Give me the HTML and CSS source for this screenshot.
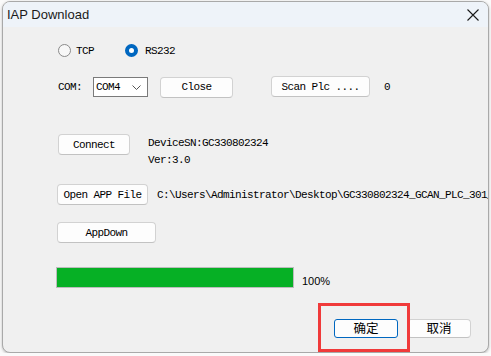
FILE: index.html
```html
<!DOCTYPE html>
<html lang="zh">
  <head>
    <meta charset="UTF-8" />
    <title>IAP Download</title>
    <link rel="stylesheet" href="styles.css">
  </head>
  <body>
    <div class="window">
      <div class="titlebar">
        <span class="title">IAP Download</span>
        <svg class="close-x" width="12" height="12" viewBox="0 0 12 12">
          <path d="M0.5 0.5 L11.5 11.5 M11.5 0.5 L0.5 11.5" stroke="#1a1a1a" stroke-width="1.1" fill="none"/>
        </svg>
      </div>

      <div class="content">
        <div class="row row-radio">
          <label class="radio">
            <span class="dot"></span>
            <span class="mono">TCP</span>
          </label>
          <label class="radio radio-rs">
            <span class="dot checked"></span>
            <span class="mono">RS232</span>
          </label>
        </div>

        <div class="row row-com">
          <span class="mono com-label">COM:</span>
          <div class="select">
            <span class="mono">COM4</span>
            <svg width="9" height="5" viewBox="0 0 9 5">
              <path d="M0.5 0.5 L4.5 4.5 L8.5 0.5" stroke="#555" stroke-width="1" fill="none"/>
            </svg>
          </div>
          <button class="btn btn-close">Close</button>
          <button class="btn btn-scan">Scan Plc ....</button>
          <span class="mono count">0</span>
        </div>

        <div class="row row-connect">
          <button class="btn btn-connect">Connect</button>
          <div class="info mono">
            <div>DeviceSN:GC330802324</div>
            <div>Ver:3.0</div>
          </div>
        </div>

        <div class="row row-file">
          <button class="btn btn-open">Open APP File</button>
          <span class="mono path">C:\Users\Administrator\Desktop\GC330802324_GCAN_PLC_301_</span>
        </div>

        <div class="row row-down">
          <button class="btn btn-appdown">AppDown</button>
        </div>

        <div class="row row-progress">
          <div class="progress"><div class="fill" style="width: 100%"></div></div>
          <span class="percent">100%</span>
        </div>

        <div class="row row-actions">
          <button class="btn btn-cn btn-ok">确定</button>
          <button class="btn btn-cn btn-cancel">取消</button>
        </div>
      </div>

      <div class="highlight"></div>
    </div>
  </body>
</html>
```

FILE: styles.css
```css
* {
    margin: 0;
    padding: 0;
    box-sizing: border-box;
}

body {
    background-color: #fafafa;
    font-family: "Noto Sans", "Liberation Sans", sans-serif;
    color: #000;
}

.window {
    position: relative;
    margin: 1px 0 0 2px;
    width: 487px;
    height: 352px;
    border: 1px solid #a9a9a9;
    border-radius: 8px;
    background-color: #f0f0f0;
    overflow: hidden;
    box-shadow: 0 1px 3px rgba(0, 0, 0, 0.25);
}

.titlebar {
    display: flex;
    align-items: center;
    justify-content: space-between;
    height: 25px;
    padding: 0 9px 0 4px;
    background-color: #eef3f9;
}

.title {
    font-family: "Liberation Sans", sans-serif;
    font-size: 13px;
    color: #1a1a1a;
}

.close-x {
    margin-top: 1px;
}

.mono {
    font-family: "Liberation Mono", "DejaVu Sans Mono", monospace;
    font-size: 11px;
    letter-spacing: -0.6px;
    color: #000;
}

.row {
    display: flex;
    align-items: center;
}

/* radio row */
.row-radio {
    margin-top: 16px;
    height: 15px;
    padding-left: 55px;
}

.radio {
    display: flex;
    align-items: center;
    gap: 5px;
}

.radio-rs {
    margin-left: 31px;
    gap: 7px;
}

.dot {
    width: 13px;
    height: 13px;
    border: 1px solid #8a8a8a;
    border-radius: 50%;
    background-color: #f7f7f7;
}

.dot.checked {
    border: 4px solid #0067c0;
    background-color: #fff;
}

/* com row */
.row-com {
    margin-top: 18px;
    height: 22px;
    padding-left: 55px;
}

.com-label {
    width: 35px;
}

.select {
    display: flex;
    align-items: center;
    justify-content: space-between;
    width: 55px;
    height: 20px;
    padding: 0 6px 0 2px;
    border: 1px solid #7a7a7a;
    background-color: #fff;
}

.btn {
    flex-shrink: 0;
    height: 21px;
    padding: 0;
    border: 1px solid #d2d2d2;
    border-bottom-color: #c2c2c2;
    border-radius: 4px;
    background-color: #fdfdfd;
    font-family: "Liberation Mono", "DejaVu Sans Mono", monospace;
    font-size: 11px;
    letter-spacing: -0.6px;
    white-space: nowrap;
    color: #000;
}

.btn-close {
    width: 73px;
    margin-left: 12px;
}

.btn-scan {
    width: 99px;
    margin-left: 38px;
    margin-top: -1px;
}

.count {
    margin-left: 14px;
}

/* connect row */
.row-connect {
    margin-top: 36px;
    height: 34px;
    padding-left: 55px;
    align-items: flex-start;
}

.btn-connect {
    width: 72px;
}

.info {
    margin-left: 18px;
    margin-top: 1px;
    line-height: 17px;
}

/* file row */
.row-file {
    margin-top: 16px;
    height: 21px;
    padding-left: 54px;
}

.btn-open {
    width: 91px;
}

.path {
    margin-left: 9px;
    white-space: nowrap;
}

/* appdown row */
.row-down {
    margin-top: 17px;
    height: 21px;
    padding-left: 54px;
}

.btn-appdown {
    width: 99px;
}

/* progress row */
.row-progress {
    margin-top: 24px;
    height: 21px;
    padding-left: 53px;
    align-items: flex-end;
}

.progress {
    width: 238px;
    height: 21px;
    border: 1px solid #bcbcbc;
    background-color: #e6e6e6;
}

.fill {
    height: 100%;
    background-color: #06b025;
}

.percent {
    margin-left: 8px;
    font-family: "Liberation Sans", sans-serif;
    font-size: 11px;
    line-height: 14px;
}

/* bottom buttons */
.row-actions {
    margin-top: 31px;
    height: 19px;
    padding-left: 331px;
    gap: 9px;
}

.btn-cn {
    width: 64px;
    height: 19px;
    font-family: "Noto Sans CJK SC", sans-serif;
    font-size: 12.5px;
    letter-spacing: 0;
    line-height: 1;
}

.btn-ok {
    border: 1px solid #0067c0;
    border-radius: 3px;
}

/* red annotation frame drawn over the dialog */
.highlight {
    position: absolute;
    left: 315px;
    top: 301px;
    width: 92px;
    height: 49px;
    border: 3px solid #f03a3a;
}
```
